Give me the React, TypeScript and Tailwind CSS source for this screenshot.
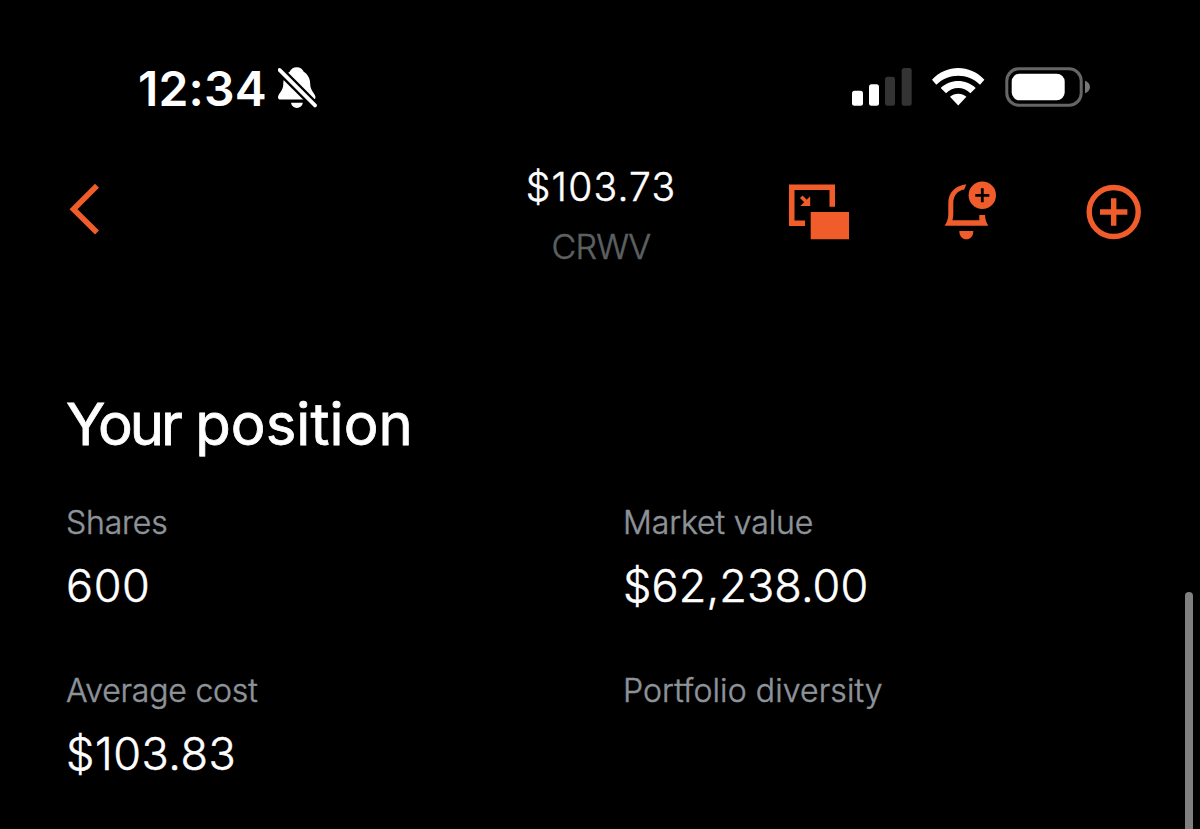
import type { ReactNode } from "react";

const stats = [
	{ label: "Shares", value: "600", labelClass: "tracking-[-0.2px]", valueClass: "tracking-[0.6px]" },
	{ label: "Market value", value: "$62,238.00", labelClass: "tracking-[-0.1px]", valueClass: "tracking-[0.1px]" },
	{ label: "Average cost", value: "$103.83", labelClass: "tracking-[-0.2px]", valueClass: "tracking-[0.5px]" },
	{ label: "Portfolio diversity", value: "", labelClass: "tracking-[0.1px]", valueClass: "" },
];

function SilentBell() {
	return (
		<svg width="39" height="42" viewBox="0 0 39 42" fill="none" aria-hidden="true">
			<path
				d="M18.7.3C15.2.3 12.7 2.3 11.7 4.8 7.5 7.5 5.3 12 5.3 17 5.3 24 0 26.5 0 30.5c0 1.3 1 2.1 2.3 2.1h32.9c1.3 0 2.3-.8 2.3-2.1 0-4-5.3-6.5-5.3-13.5 0-5-2.2-9.5-6.5-12.2C24.7 2.3 22.2.3 18.7.3Z"
				fill="white"
			/>
			<path d="M13 35.7h11.8c-.5 3.2-2.8 5.2-5.9 5.2s-5.4-2-5.9-5.2Z" fill="white" />
			<path d="M-2-.6 41 42.4" stroke="black" strokeWidth="8.5" />
			<path d="M1.5 2.9 37 38.4" stroke="white" strokeWidth="3.8" strokeLinecap="round" />
		</svg>
	);
}

function Signal() {
	return (
		<svg width="60" height="38" viewBox="0 0 60 38" aria-hidden="true">
			<rect x="0" y="22.7" width="11" height="15" rx="2.5" fill="white" />
			<rect x="17" y="16.3" width="10" height="21.4" rx="2.5" fill="white" />
			<rect x="33" y="8.7" width="10" height="29" rx="2.5" fill="#333333" />
			<rect x="49.7" y="0" width="10" height="37.7" rx="2.5" fill="#333333" />
		</svg>
	);
}

function Wifi() {
	return (
		<svg width="53" height="38" viewBox="0 0 53 38" fill="white" aria-hidden="true">
			<path d="M0 11.7C14.5-3.9 37.9-3.9 52.4 11.7L48 16.7C36 4.7 16.4 4.7 4.3 16.7Z" />
			<path d="M8.7 20C18.5 10.7 33.9 10.7 43.7 20L38.4 25.3C31.5 18.2 20.9 18.2 14 25.3Z" />
			<path d="M18 28.7C22.5 24.7 29.9 24.7 34.4 28.7L26.2 37.5Z" />
		</svg>
	);
}

function Battery() {
	return (
		<svg width="86" height="40" viewBox="0 0 86 40" fill="none" aria-hidden="true">
			<rect x="1.8" y="1.8" width="74.4" height="36.4" rx="12" stroke="#666666" strokeWidth="3" />
			<rect x="6.7" y="6.7" width="53" height="26.6" rx="8" fill="white" />
			<path d="M80 13.7c3 1 5 3.4 5 6.3s-2 5.3-5 6.3Z" fill="#777777" />
		</svg>
	);
}

function NavButton({ label, children }: { label: string; children: ReactNode }) {
	return (
		<button aria-label={label} className="block size-16">
			<svg width="64" height="64" viewBox="0 0 64 64" fill="none" aria-hidden="true">
				{children}
			</svg>
		</button>
	);
}

export default function App() {
	return (
		<main className="relative h-[829px] w-[1200px] overflow-hidden bg-black font-['Inter',sans-serif] text-white">
			{/* Status bar */}
			<div className="flex h-[111px] items-end justify-between pr-[109px] pl-[138px]">
				<div className="flex h-12 items-center gap-[11px]">
					<span className="pt-1 text-[48px] leading-[48px] font-semibold tracking-[0.2px]">12:34</span>
					<div className="pt-0.5">
						<SilentBell />
					</div>
				</div>
				<div className="flex h-12 items-center">
					<Signal />
					<div className="ml-5">
						<Wifi />
					</div>
					<div className="ml-5">
						<Battery />
					</div>
				</div>
			</div>

			{/* Navigation */}
			<header className="mt-[55px] grid grid-cols-[457px_160px_1fr] items-start pr-[54px] pl-16 text-[#f15c2b]">
				<button aria-label="Back" className="mt-3.5 block w-10">
					<svg width="40" height="60" viewBox="0 0 40 60" fill="none" aria-hidden="true">
						<path d="M33 5.8 9.5 29.2 33 52.6" stroke="currentColor" strokeWidth="5.6" />
					</svg>
				</button>
				<div className="flex flex-col items-center gap-5 font-light whitespace-nowrap [-webkit-text-stroke:0.5px]">
					<span className="pt-px text-[39px] leading-10 tracking-[1.2px] text-white">$103.73</span>
					<span className="text-[34px] leading-10 tracking-[-0.8px] text-[#5c6063]">CRWV</span>
				</div>
				<div className="mt-3.5 flex justify-end gap-[84px]">
					<NavButton label="Minimize">
						<path d="M19 43.2H5.75V7.2H46.25V26.7" stroke="currentColor" strokeWidth="5.5" />
						<path d="M24.7 32H63v27.3H24.7Z" fill="currentColor" />
						<path d="M15.3 16.8 21 22.5" stroke="currentColor" strokeWidth="3.6" />
						<path d="M24.2 16.2v9.9H14.3Z" fill="currentColor" />
					</NavButton>
					<NavButton label="Add alert">
						<path
							d="M32.3 4.3C22 5.5 14.3 12 14.3 23V34C14.3 39 13 42 10.7 45.7H54.3C52 42 51.2 39 51 35H45.3V40.3H18.5C19 38 19.3 36 19.3 33V23C19.3 15 24 10.5 30.3 9.5Z"
							fill="currentColor"
						/>
						<path d="M25.3 51h14c0 5-2.8 8.3-7 8.3s-7-3.3-7-8.3Z" fill="currentColor" />
						<circle cx="48.3" cy="15.3" r="13.7" fill="currentColor" />
						<path d="M48.3 8.3v14M41.3 15.3h14" stroke="black" strokeWidth="2.8" />
					</NavButton>
					<NavButton label="Add to watchlist">
						<circle cx="31.7" cy="32" r="24.5" stroke="currentColor" strokeWidth="5.4" />
						<path d="M31.7 18.3v27.4M18 32h27.4" stroke="currentColor" strokeWidth="5.4" />
					</NavButton>
				</div>
			</header>

			{/* Position */}
			<section className="mt-[125px] pl-[66px]">
				<h1 className="text-[58px] leading-16 tracking-[0.1px] whitespace-nowrap [-webkit-text-stroke:0.8px]">
					<span className="mr-0.5 tracking-[-3px]">Your </span>position
				</h1>
				<dl className="mt-[47px] grid grid-cols-[557px_1fr] gap-y-16">
					{stats.map((stat) => (
						<div key={stat.label} className="h-[104px] font-light whitespace-nowrap [-webkit-text-stroke:0.5px]">
							<dt className={`text-[32px] leading-10 text-[#8d9399] ${stat.labelClass}`}>{stat.label}</dt>
							<dd className={`mt-[19px] text-[45px] leading-[48px] ${stat.valueClass}`}>{stat.value}</dd>
						</div>
					))}
				</dl>
			</section>

			{/* Scroll indicator */}
			<div className="absolute top-[592px] right-[7px] h-80 w-[8.5px] rounded-full bg-[#808080]" />
		</main>
	);
}
